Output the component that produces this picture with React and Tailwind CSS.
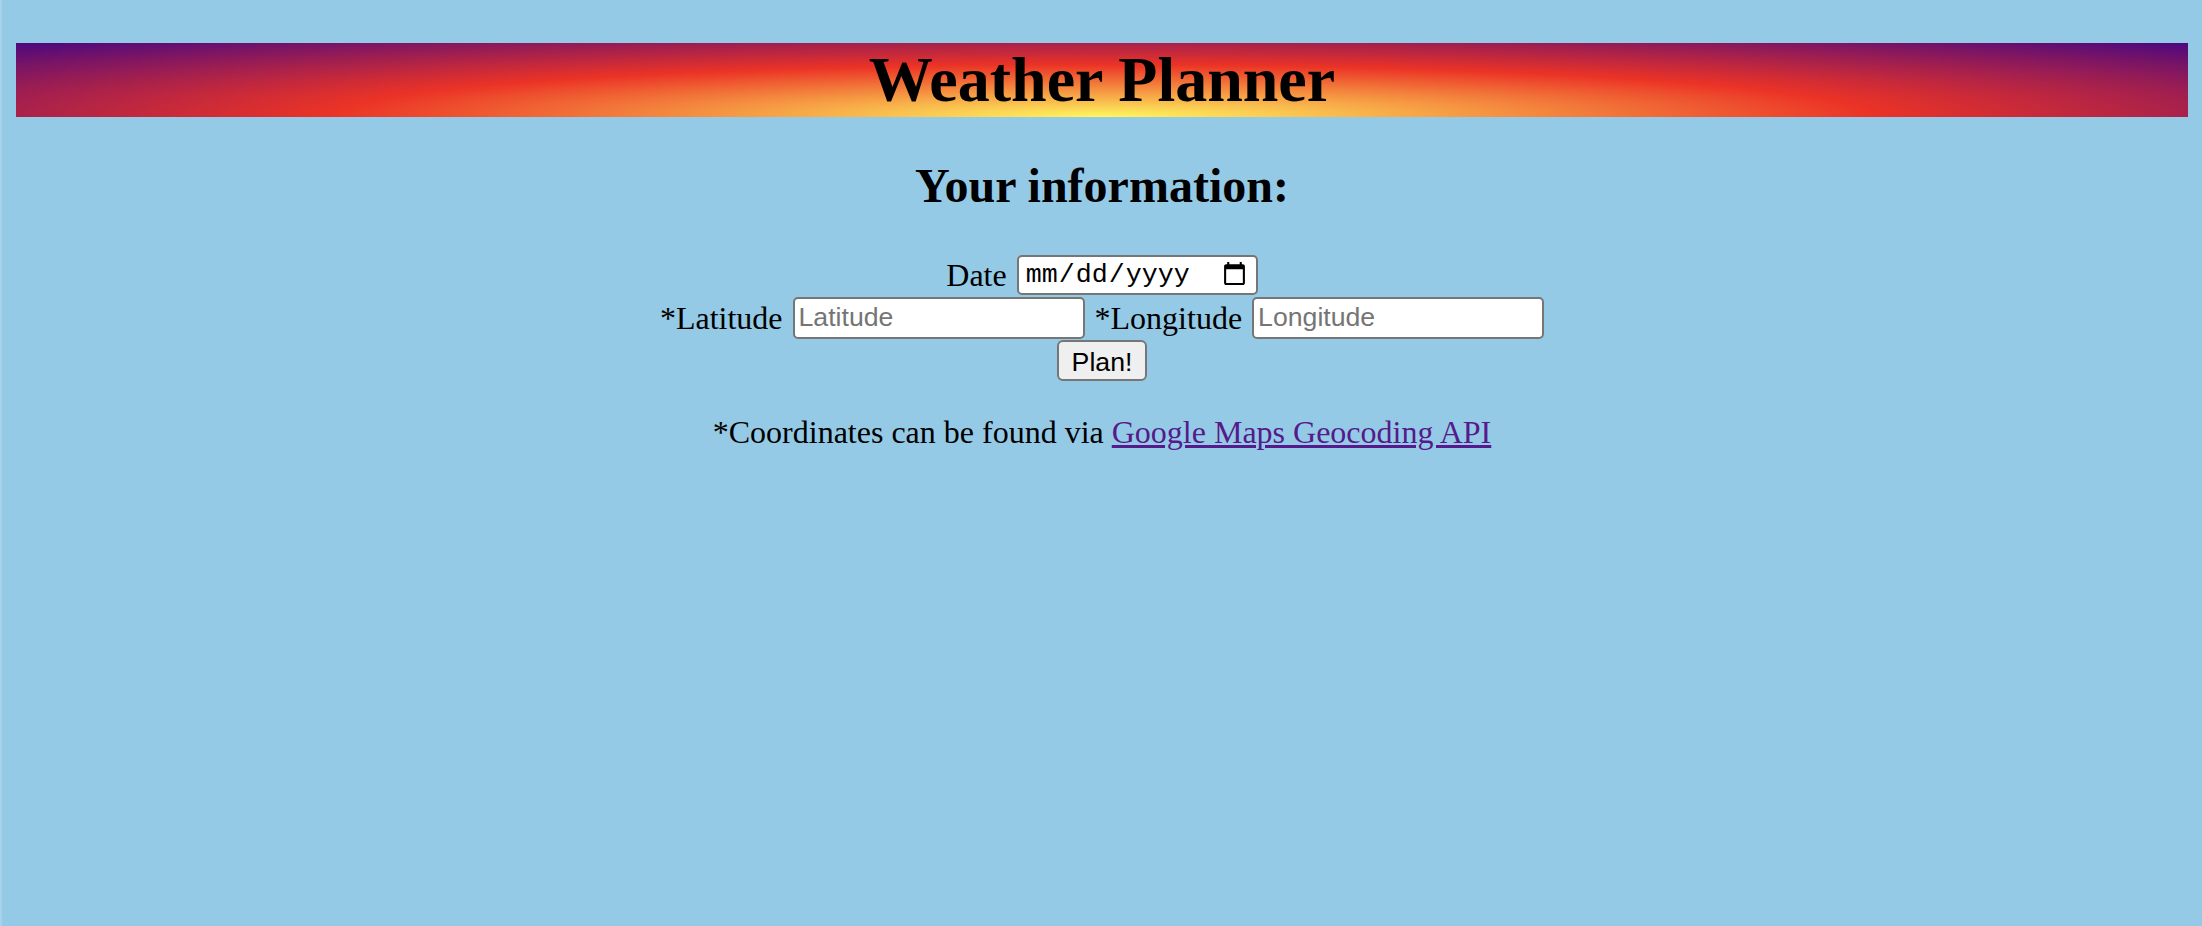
import { useState } from 'react';

const serif = "font-['Liberation_Serif','Times_New_Roman',serif]";
const sans = "font-['Liberation_Sans',Arial,sans-serif]";

export default function App() {
  const [date, setDate] = useState('');
  const [lat, setLat] = useState('');
  const [lng, setLng] = useState('');

  return (
    <div className={`h-screen overflow-hidden bg-[#95cae6] border-l-2 border-[#a6d3ec] pt-[43px] pl-[14px] pr-[14px] text-black ${serif}`}>
      <h1 className="mb-[41px] h-[74px] leading-[74px] text-center text-[64px] font-bold bg-[radial-gradient(ellipse_at_bottom,#fff75e,#eb3326,#4b087f)]">
        Weather Planner
      </h1>

      <h2 className="mb-[40px] leading-[55px] text-center text-[48px] font-bold">Your information:</h2>

      <form className="flex flex-col items-center text-[32px]" onSubmit={(e) => e.preventDefault()}>
        {/* date row */}
        <div className="flex h-[43px] items-center justify-center gap-[10px]">
          <label htmlFor="date">Date</label>
          <input
            id="date"
            type="date"
            value={date}
            onChange={(e) => setDate(e.target.value)}
            className="h-[40px] w-[241px] rounded-[5px] border-2 border-[#767676] bg-white px-[6px] text-[26.67px] font-['Liberation_Mono','Courier_New',monospace]"
          />
        </div>

        {/* coordinates row */}
        <div className="flex h-[43px] items-center justify-center gap-[10px]">
          <label htmlFor="lat">*Latitude</label>
          <input
            id="lat"
            type="text"
            placeholder="Latitude"
            value={lat}
            onChange={(e) => setLat(e.target.value)}
            className={`h-[42px] w-[292px] rounded-[5px] border-2 border-[#767676] bg-white px-[4px] text-[26.67px] placeholder:text-[#757575] ${sans}`}
          />
          <label htmlFor="lng">*Longitude</label>
          <input
            id="lng"
            type="text"
            placeholder="Longitude"
            value={lng}
            onChange={(e) => setLng(e.target.value)}
            className={`h-[42px] w-[292px] rounded-[5px] border-2 border-[#767676] bg-white px-[4px] text-[26.67px] placeholder:text-[#757575] ${sans}`}
          />
        </div>

        <div className="flex h-[43px] items-center justify-center">
          <button
            type="submit"
            className={`h-[41px] w-[90px] rounded-[6px] border-2 border-[#767676] bg-[#efefef] text-[26.67px] ${sans}`}
          >
            Plan!
          </button>
        </div>
      </form>

      <p className="mt-[32px] leading-[37px] text-center text-[32px]">
        *Coordinates can be found via{' '}
        <a
          href="#"
          className="text-[#551a8b] underline"
          onClick={(e) => e.preventDefault()}
        >
          Google Maps Geocoding API
        </a>
      </p>
    </div>
  );
}
